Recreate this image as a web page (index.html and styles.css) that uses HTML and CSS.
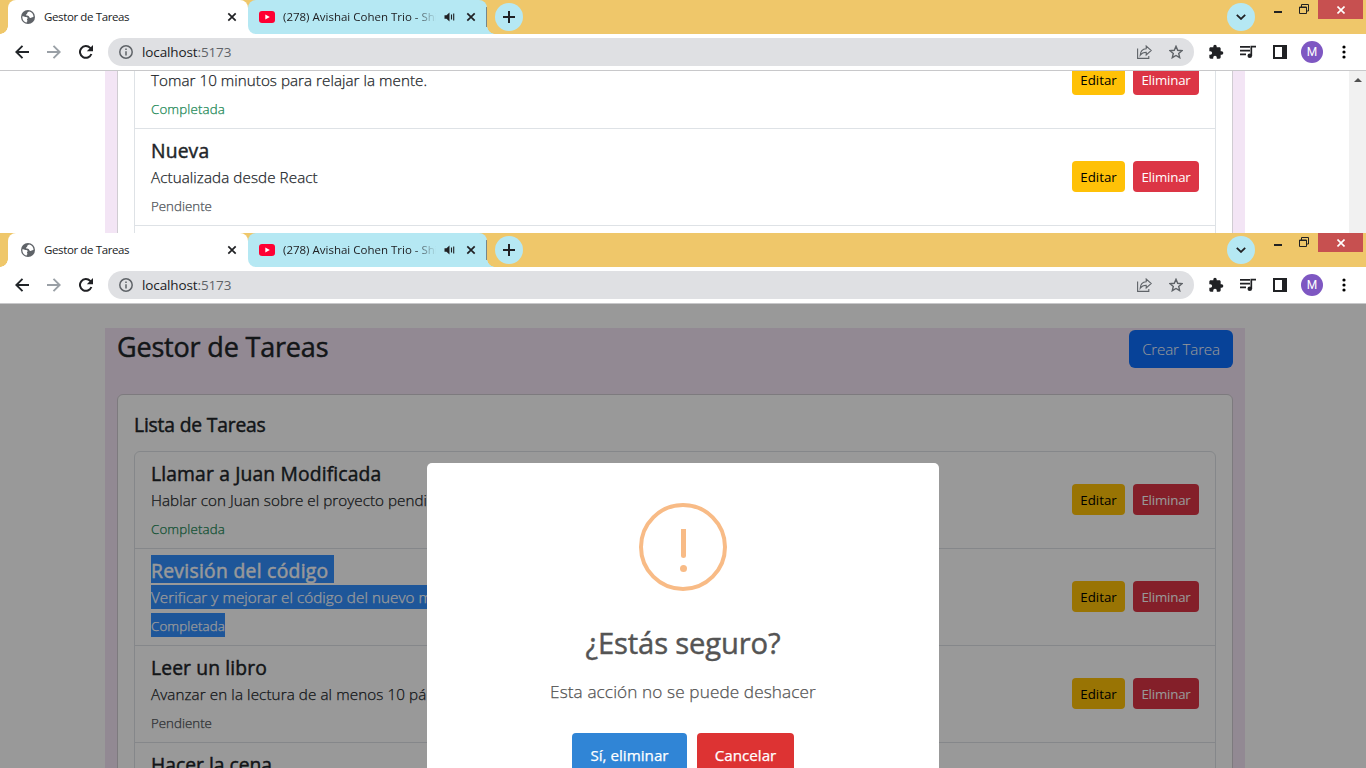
FILE: index.html
```html
<!DOCTYPE html>
<html lang="es">
<head>
<meta charset="utf-8">
<title>Gestor de Tareas</title>
<link rel="stylesheet" href="styles.css">
</head>
<body>
<svg class="defs" width="0" height="0" aria-hidden="true">
  <symbol id="globe" viewBox="0 0 14 14"><circle cx="7" cy="7" r="7" fill="#5f6368"/><path d="M1.400 6.300C3 5.800 3.800 7 5.200 7c1.400 0 2 1.100 1 2-.7.7.4 1.200.2 2-.2.800-.9.9-.9 1.700C3 12 1 9.500 1.400 6.300zM8.300 1.500C7.300 2 6 2.300 6.200 3.300c.2.900-1.200.8-1.100 1.600.1.900 1.700.6 2.500 1.100.8.6.4 1.700 1.600 1.900 1.300.2 1.700-1 3.300-.8C12.700 4.500 11 2 8.300 1.500z" fill="#fff"/></symbol>
  <symbol id="close" viewBox="0 0 10 10"><path d="M1.300 1.300l7.400 7.400M8.700 1.300L1.300 8.700" stroke="#202124" stroke-width="1.700" fill="none"/></symbol>
  <symbol id="youtube" viewBox="0 0 16 12"><rect width="16" height="12" rx="3" fill="#f03"/><path d="M6.300 3.400v5.200L10.800 6z" fill="#fff"/></symbol>
  <symbol id="sound" viewBox="0 0 11 10"><path d="M.5 3.200h2L5.500.5v9L2.500 6.800h-2z" fill="#202124"/><path d="M7.500 2.500v5M9.700 1.500v7" stroke="#202124" stroke-width="1.100"/></symbol>
  <symbol id="plus" viewBox="0 0 12 12"><path d="M6 0v12M0 6h12" stroke="#202124" stroke-width="2"/></symbol>
  <symbol id="chev" viewBox="0 0 10 6"><path d="M.8.8L5 4.900 9.200.8" stroke="#202124" stroke-width="1.800" fill="none"/></symbol>
  <symbol id="restore" viewBox="0 0 10 10"><path d="M.5 3h7v6.500h-7zM.5 3.500h7M2.500 3V.5h7v6.500H8" stroke="#222" fill="none"/></symbol>
  <symbol id="wclose" viewBox="0 0 8 8"><path d="M.5.5l7 7M7.500.5l-7 7" stroke="#fff" stroke-width="1.600"/></symbol>
  <symbol id="arrow" viewBox="0 0 14 14"><path d="M14 7H1.500M7.500.800L1.300 7l6.200 6.200" stroke="currentColor" stroke-width="1.900" fill="none"/></symbol>
  <symbol id="reload" viewBox="0 0 14 14"><path d="M12.400 9A5.900 5.900 0 1 1 11.200 2.900L12.600 4.400" stroke="#202124" stroke-width="2" fill="none"/><path d="M14 0v6.200H7.800z" fill="#202124"/></symbol>
  <symbol id="info" viewBox="0 0 14 14"><circle cx="7" cy="7" r="6.200" stroke="#5f6368" stroke-width="1.500" fill="none"/><path d="M7 6.200v4.200M7 3.400v1.600" stroke="#5f6368" stroke-width="1.500"/></symbol>
  <symbol id="share" viewBox="0 0 15 14"><path d="M.6 3.500v9.900h11.200V11" stroke="#5f6368" stroke-width="1.100" fill="none"/><path d="M3.200 10.300C3.400 6.500 5.400 4.100 9.200 3.800V1l5.100 4.500-5.100 4.500V7.300c-2.600 0-4.500.8-6 3z" stroke="#5f6368" stroke-width="1.100" fill="none"/></symbol>
  <symbol id="star" viewBox="0 0 14 14"><path d="M7 1.300l1.700 4 4.300.4-3.300 2.800 1 4.200L7 10.500l-3.700 2.200 1-4.200L1 5.700l4.300-.4z" stroke="#5f6368" stroke-width="1.400" fill="none"/></symbol>
  <symbol id="puzzle" viewBox="0 0 24 24"><path d="M20.500 11H19V7c0-1.100-.9-2-2-2h-4V3.500a2.500 2.500 0 0 0-5 0V5H4c-1.100 0-2 .9-2 2v3.800h1.500a2.700 2.700 0 0 1 0 5.400H2V20c0 1.100.9 2 2 2h3.800v-1.500a2.700 2.700 0 0 1 5.400 0V22H17c1.100 0 2-.9 2-2v-4h1.500a2.500 2.500 0 0 0 0-5z" fill="#202124"/></symbol>
  <symbol id="queue" viewBox="0 0 16 14"><path d="M0 1.800h10M0 5.600h10M0 9.400h6" stroke="#202124" stroke-width="1.700"/><circle cx="9.800" cy="10.700" r="2.300" fill="#202124"/><path d="M11.300 10.700V1.700H16" stroke="#202124" stroke-width="1.700" fill="none"/></symbol>
  <symbol id="panel" viewBox="0 0 14 14"><path d="M1 1h12v12H1z" fill="none" stroke="#202124" stroke-width="2"/><path d="M9 0h5v14H9z" fill="#202124"/></symbol>
  <symbol id="dots" viewBox="0 0 4 14"><circle cx="2" cy="2" r="1.600"/><circle cx="2" cy="7" r="1.600"/><circle cx="2" cy="12" r="1.600"/></symbol>
</svg>

<section class="window first">
  <header class="tabs">
    <div class="tab active"><svg class="i14"><use href="#globe"/></svg><span class="tab-title"><b class="t1">Gestor de Tareas</b></span><svg class="i10"><use href="#close"/></svg></div>
    <div class="tab other"><svg class="yt"><use href="#youtube"/></svg><span class="tab-title fade"><b class="t2">(278) Avishai Cohen Trio - Shi</b></span><svg class="snd"><use href="#sound"/></svg><svg class="i10"><use href="#close"/></svg></div>
    <div class="round add"><svg class="i12"><use href="#plus"/></svg></div>
    <div class="round search"><svg class="chev"><use href="#chev"/></svg></div>
    <div class="min"></div><svg class="restore"><use href="#restore"/></svg>
    <div class="wclose"><svg><use href="#wclose"/></svg></div>
  </header>
  <nav class="toolbar">
    <svg class="i14"><use href="#arrow"/></svg><svg class="i14 fwd"><use href="#arrow"/></svg><svg class="i14"><use href="#reload"/></svg>
    <div class="omni"><svg class="i14"><use href="#info"/></svg><span class="url">localhost<i>:5173</i></span><svg class="share"><use href="#share"/></svg><svg class="i14"><use href="#star"/></svg></div>
    <svg class="puzzle"><use href="#puzzle"/></svg><svg class="queue"><use href="#queue"/></svg><svg class="i14 pn"><use href="#panel"/></svg><div class="avatar">M</div><svg class="dots"><use href="#dots"/></svg>
  </nav>
  <main class="page">
    <div class="container">
      <div class="card"><ul class="list">
        <li class="item"><div class="info"><h5></h5><p class="p-tomar">Tomar 10 minutos para relajar la mente.</p><small class="done">Completada</small></div><div class="acts"><button class="btn edit">Editar</button><button class="btn del">Eliminar</button></div></li>
        <li class="item"><div class="info"><h5 class="h-nueva">Nueva</h5><p class="p-act">Actualizada desde React</p><small class="pend">Pendiente</small></div><div class="acts"><button class="btn edit">Editar</button><button class="btn del">Eliminar</button></div></li>
        <li class="item"></li>
      </ul></div>
    </div>
    <div class="scroll"><span></span></div>
  </main>
</section>

<section class="window second">
  <header class="tabs">
    <div class="tab active"><svg class="i14"><use href="#globe"/></svg><span class="tab-title"><b class="t1">Gestor de Tareas</b></span><svg class="i10"><use href="#close"/></svg></div>
    <div class="tab other"><svg class="yt"><use href="#youtube"/></svg><span class="tab-title fade"><b class="t2">(278) Avishai Cohen Trio - Shi</b></span><svg class="snd"><use href="#sound"/></svg><svg class="i10"><use href="#close"/></svg></div>
    <div class="round add"><svg class="i12"><use href="#plus"/></svg></div>
    <div class="round search"><svg class="chev"><use href="#chev"/></svg></div>
    <div class="min"></div><svg class="restore"><use href="#restore"/></svg>
    <div class="wclose"><svg><use href="#wclose"/></svg></div>
  </header>
  <nav class="toolbar">
    <svg class="i14"><use href="#arrow"/></svg><svg class="i14 fwd"><use href="#arrow"/></svg><svg class="i14"><use href="#reload"/></svg>
    <div class="omni"><svg class="i14"><use href="#info"/></svg><span class="url">localhost<i>:5173</i></span><svg class="share"><use href="#share"/></svg><svg class="i14"><use href="#star"/></svg></div>
    <svg class="puzzle"><use href="#puzzle"/></svg><svg class="queue"><use href="#queue"/></svg><svg class="i14 pn"><use href="#panel"/></svg><div class="avatar">M</div><svg class="dots"><use href="#dots"/></svg>
  </nav>
  <main class="page">
    <div class="container">
      <div class="head"><h1>Gestor de Tareas</h1><button class="create">Crear Tarea</button></div>
      <div class="card"><h5 class="card-title">Lista de Tareas</h5><ul class="list">
        <li class="item"><div class="info"><h5 class="h-llamar">Llamar a Juan Modificada</h5><p class="p-hablar">Hablar con Juan sobre el proyecto pendi</p><small class="done">Completada</small></div><div class="acts"><button class="btn edit">Editar</button><button class="btn del">Eliminar</button></div></li>
        <li class="item selected"><div class="info"><h5 class="h-rev">Revisión del código </h5><p class="p-ver">Verificar y mejorar el código del nuevo m</p><small class="done">Completada</small></div><div class="acts"><button class="btn edit">Editar</button><button class="btn del">Eliminar</button></div></li>
        <li class="item"><div class="info"><h5 class="h-leer">Leer un libro</h5><p class="p-av">Avanzar en la lectura de al menos 10 pá</p><small class="pend">Pendiente</small></div><div class="acts"><button class="btn edit">Editar</button><button class="btn del">Eliminar</button></div></li>
        <li class="item"><div class="info"><h5 class="h-hacer">Hacer la cena</h5></div></li>
      </ul></div>
    </div>
    <div class="overlay">
      <div class="dialog">
        <svg class="warn" viewBox="0 0 88 88"><circle cx="44" cy="44" r="42" fill="none" stroke="#f8bb86" stroke-width="4"/><path d="M42 26h5v27q0 2-2.500 2T42 53z" fill="#f8bb86"/><circle cx="44.500" cy="65.500" r="3.500" fill="#f8bb86"/></svg>
        <h2>¿Estás seguro?</h2>
        <p>Esta acción no se puede deshacer</p>
        <div class="dialog-acts"><button class="yes">Sí, eliminar</button><button class="no">Cancelar</button></div>
      </div>
    </div>
  </main>
</section>
</body>
</html>
```
FILE: styles.css
```css
* { box-sizing: border-box; }
body { margin: 0; width: 1366px; height: 768px; overflow: hidden; background: #fff; color: #212529; font: 400 15.2px/24px "Open Sans", "Noto Sans", sans-serif; }
h1, h2, h5, p, ul { margin: 0; padding: 0; font-weight: 400; }
h1, h2, h5 { -webkit-text-stroke: .45px currentColor; }
p, small { font-weight: 300; -webkit-text-stroke: .25px currentColor; }
button { border: 0; padding: 0; font: inherit; }
svg { display: block; flex: none; }
.defs { position: absolute; }
.window { display: flex; flex-direction: column; overflow: hidden; background: #fff; }
.first { height: 233px; }
.second { height: 535px; }
.i14 { width: 14px; height: 14px; }
.i12 { width: 12px; height: 12px; }
.i10 { width: 10px; height: 10px; }

/* Browser tab strip, with the flared feet of the tabs painted in its corners */
.tabs {
  height: 34px; flex: none; display: flex; padding-left: 8px;
  background:
    radial-gradient(circle at 0 0, transparent 7.5px, #fff 8px) 0 26px / 8px 8px no-repeat,
    linear-gradient(#fff, #fff) 244px 24px / 14px 10px no-repeat,
    radial-gradient(circle at 100% 0, transparent 7.5px, #b5e8f3 8px) 487px 26px / 8px 8px no-repeat,
    #efc76a;
}
.tab { height: 34px; display: flex; align-items: center; font-size: 11.5px; line-height: 18px; color: #202124; }
.tab b { display: inline-block; font-weight: 400; white-space: nowrap; }
.t1 { letter-spacing: -.38px; }
.active { width: 240px; padding: 0 11px 0 13px; background: #fff; border-radius: 8px 8px 0 0; }
.tab-title { flex: 1; margin-left: 9px; }
.other { width: 239px; padding: 0 11px; background: linear-gradient(#76878a, #76878a) 238px 7px / 1px 20px no-repeat, #b5e8f3; border-radius: 8px 8px 0 8px; }
.other .tab-title { margin-left: 8px; flex: none; width: 153px; }
.fade { -webkit-mask-image: linear-gradient(90deg, #000 130px, transparent 154px); mask-image: linear-gradient(90deg, #000 130px, transparent 154px); }
.yt { width: 16px; height: 12px; }
.snd { width: 11px; height: 10px; margin-left: 8px; margin-right: auto; }
.round { width: 28px; height: 28px; border-radius: 50%; background: #b5e8f3; display: flex; align-items: center; justify-content: center; margin-top: 3px; }
.add { margin-left: 8px; }
.search { margin-left: auto; }
.chev { width: 10px; height: 6px; }
.min { width: 8px; height: 2px; background: #222; margin: 11px 17px 0 19px; }
.restore { width: 10px; height: 10px; margin-top: 4px; margin-right: 9px; }
.wclose { width: 45px; height: 19px; background: #c75050; margin-right: 3px; display: flex; align-items: center; justify-content: center; }
.wclose svg { width: 8px; height: 8px; }

/* Address bar */
.toolbar { height: 37px; flex: none; display: flex; align-items: center; padding: 0 20px 0 15px; border-bottom: 1px solid #c8c8ca; }
.toolbar > .i14 { margin-right: 18px; }
.fwd { transform: scaleX(-1); color: #9aa0a6; }
.toolbar > .i14:nth-child(3) { margin-right: 15px; }
.omni { width: 1086px; height: 28px; border-radius: 14px; background: #dfe0e3; display: flex; align-items: center; padding: 0 11px; }
.url { flex: 1; margin-left: 9px; font-size: 13.5px; line-height: 22px; letter-spacing: -.12px; color: #202124; }
.url i { font-style: normal; color: #5f6368; }
.share { width: 15px; height: 14px; margin-right: 17px; }
.puzzle { width: 16px; height: 16px; margin-left: 14px; }
.queue { width: 16px; height: 14px; margin-left: 16px; }
.toolbar > .pn { margin: 0 0 0 17px; }
.avatar { width: 22px; height: 22px; border-radius: 50%; background: #7e57c2; color: #fff; font: 12px/22px Roboto, sans-serif; text-align: center; margin-left: 14px; }
.dots { width: 4px; height: 14px; margin-left: auto; }

/* Task list */
.page { flex: 1; position: relative; overflow: hidden; }
.container { width: 1140px; margin-left: 105px; padding: 0 12px; background: #f3e5f5; }
.first .container { margin-top: -40px; }
.second .container { margin-top: 24px; }
.card { background: #fff; border: 1px solid #d0ccd2; padding: 0 16px; }
.first .card { border-width: 0 1px; }
.second .card { padding: 16px; border-radius: 6px; }
.list { list-style: none; border: 1px solid #dee2e6; border-radius: 6px; }
.first .list { border-radius: 0; }
.item { min-height: 97px; border-bottom: 1px solid #dee2e6; padding: 8px 16px; display: flex; align-items: center; justify-content: space-between; }
.info { align-self: flex-start; display: flex; flex-direction: column; align-items: flex-start; gap: 4px; }
.item h5 { font-size: 19.3px; line-height: 24px; height: 24px; padding-top: 2px; white-space: pre; }
.item p { white-space: nowrap; }
.item small { font-size: 13.3px; line-height: 24px; height: 24px; padding-top: 1px; }
.done { color: #198754; letter-spacing: .15px; }
.pend { color: #4c5156; letter-spacing: .02px; }
.h-nueva { letter-spacing: .15px; }
.h-llamar { letter-spacing: .15px; }
.h-rev { letter-spacing: .3px; }
.h-leer { letter-spacing: .13px; }
.p-tomar { letter-spacing: .04px; }
.p-act { letter-spacing: .08px; }
.p-hablar { letter-spacing: .05px; }
.p-ver { letter-spacing: .08px; }
.p-av { letter-spacing: .1px; }
.acts { display: flex; gap: 8px; margin-top: -1px; }
.btn { height: 31px; border-radius: 4px; font-size: 13.3px; line-height: 30px; padding-top: 1px; }
.edit { width: 53px; background: #ffc107; color: #000; }
.del { width: 66px; background: #dc3545; color: #fff; letter-spacing: -.2px; }
.scroll { position: absolute; right: 0; top: 0; width: 17px; height: 100%; background: #f1f1f1; }
.scroll span { position: absolute; left: 5px; top: 7px; border: solid transparent; border-width: 0 4px 4px; border-bottom-color: #505050; }

.head { height: 66px; display: flex; justify-content: space-between; }
.head h1 { font-size: 27px; line-height: 37px; letter-spacing: -.18px; white-space: nowrap; }
.create { width: 104px; height: 38px; margin-top: 2px; border-radius: 6px; background: #0d6efd; color: #fff; font-weight: 300; letter-spacing: -.2px; }
.card-title { font-size: 19.3px; line-height: 24px; padding: 2px 0 0; height: 40px; letter-spacing: -.18px; }
.selected h5, .selected p, .selected small { background: #3390ff; color: #fff; }
.selected h5 { box-shadow: 0 -2px #3390ff, 0 2px #3390ff; }

/* Confirmation dialog */
.overlay { position: absolute; inset: 0; background: rgba(0, 0, 0, .4); }
.dialog { width: 512px; height: 420px; margin: 159px 0 0 427px; background: #fff; border-radius: 5px; display: flex; flex-direction: column; align-items: center; color: #545454; }
.warn { width: 88px; height: 88px; margin-top: 40px; }
.dialog h2 { font-size: 29.2px; line-height: 36px; margin-top: 34px; letter-spacing: -.15px; white-space: nowrap; }
.dialog p { font-size: 17.2px; line-height: 24px; margin-top: 19px; letter-spacing: .1px; white-space: nowrap; }
.dialog-acts { display: flex; gap: 10px; margin-top: 29px; }
.dialog-acts button { height: 44px; border-radius: 4px; color: #fff; -webkit-text-stroke: .25px currentColor; }
.yes { width: 115px; background: #3085d6; }
.no { width: 97px; background: #d33; }
```
